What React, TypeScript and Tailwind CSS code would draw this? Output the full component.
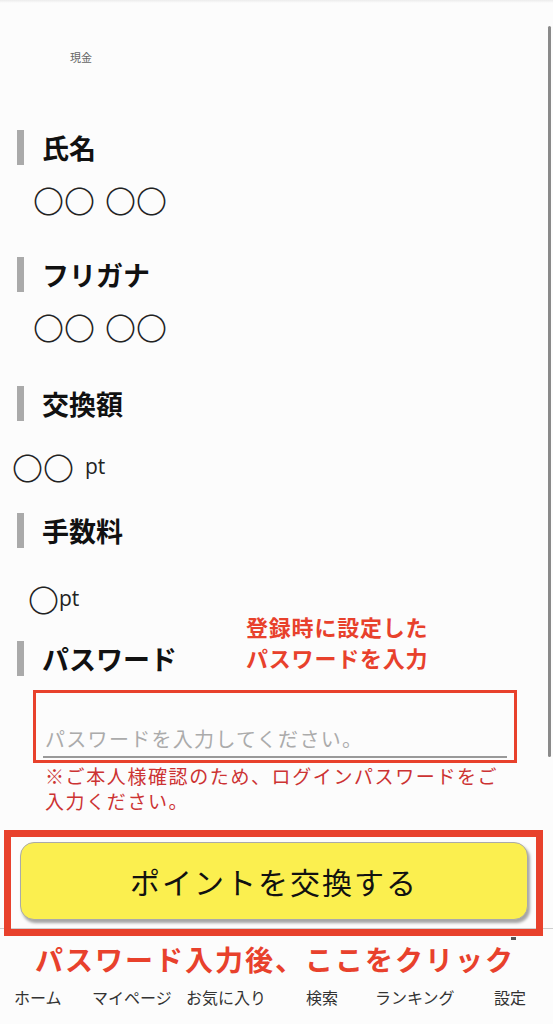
import React from 'react';

const jp = "font-['Noto_Sans_CJK_JP','Noto_Sans',sans-serif]";

interface HeadingProps {
  title: string;
  className?: string;
}

const SectionHeading: React.FC<HeadingProps> = ({ title, className = '' }) => (
  <div className={`flex items-center h-[35px] ${className}`}>
    <span className="ml-[17px] w-[7px] h-full bg-[#aaaaaa]" />
    <h3 className="ml-[18px] text-[27px] leading-[35px] font-bold text-[#111]">{title}</h3>
  </div>
);

const navItems = [
  { label: 'ホーム', cls: 'ml-[14px] w-[78px]' },
  { label: 'マイページ', cls: 'w-[94px]' },
  { label: 'お気に入り', cls: 'w-[120px]' },
  { label: '検索', cls: 'w-[69px]' },
  { label: 'ランキング', cls: 'w-[119px]' },
  { label: '設定', cls: 'w-[50px]' },
];

export default function App() {
  return (
    <div className={`relative w-[553px] h-[1024px] overflow-hidden bg-[#fcfcfc] ${jp}`}>
      {/* header shadow */}
      <div className="h-[3px] bg-gradient-to-b from-[#ececec] to-[#fcfcfc]" />

      <div className="pt-[46px] pl-[70px] text-[11px] leading-[16px] text-[#666]">現金</div>

      <SectionHeading title="氏名" className="mt-[65px]" />
      <div className="mt-[16px] pl-[33px] h-[36px] flex items-center text-[31px] font-light text-[#222] leading-none">
        〇〇<span className="w-[10px]" />〇〇
      </div>

      <SectionHeading title="フリガナ" className="mt-[40px]" />
      <div className="mt-[16px] pl-[33px] h-[36px] flex items-center text-[31px] font-light text-[#222] leading-none">
        〇〇<span className="w-[10px]" />〇〇
      </div>

      <SectionHeading title="交換額" className="mt-[42px]" />
      <div className="mt-[27px] pl-[12px] h-[36px] flex items-center text-[#222]">
        <span className="text-[31px] font-light leading-none">〇〇</span>
        <span className="ml-[11px] text-[21px] leading-none font-['Open_Sans',sans-serif]">pt</span>
      </div>

      <SectionHeading title="手数料" className="mt-[29px]" />
      <div className="mt-[32px] pl-[28px] h-[36px] flex items-center text-[#222]">
        <span className="text-[31px] font-light leading-none">〇</span>
        <span className="text-[21px] leading-none font-['Open_Sans',sans-serif]">pt</span>
      </div>

      <div className="relative mt-[25px]">
        <SectionHeading title="パスワード" />
        <p className="absolute left-[246px] top-[-30px] text-[22px] leading-[31px] font-bold tracking-[0.8px] text-[#e8412c]">
          登録時に設定した
          <br />
          パスワードを入力
        </p>
      </div>

      <div className="mt-[14px] ml-[33px] w-[484px] h-[73px] border-[3px] border-[#e8412c] flex items-end px-[7px] pb-[2px]">
        <input
          type="password"
          placeholder="パスワードを入力してください。"
          className="w-full h-[40px] bg-transparent border-b-2 border-[#999] text-[20px] tracking-[1.3px] pl-[2px] pt-[2px] placeholder-[#ababab] outline-none"
        />
      </div>
      <div className="pl-[45px] text-[19px] leading-[25px] tracking-[1.6px] text-[#cc3333]">
        <p>※ご本人様確認のため、ログインパスワードをご</p>
        <p>入力ください。</p>
      </div>

      {/* exchange button */}
      <div className="relative z-10 mt-[17px] ml-[4px] w-[539px] h-[106px] border-[7px] border-[#e8412c] pt-[5px] pl-[9px] pr-[8px]">
        <button className="w-full h-[78px] rounded-[14px] bg-[#fbef4f] border border-[#aaa] shadow-[2px_3px_3px_rgba(0,0,0,0.35)] text-[30px] tracking-[2px] text-[#111]">
          ポイントを交換する
        </button>
      </div>

      {/* bottom navigation */}
      <nav className="absolute left-0 right-0 bottom-0 h-[96px] border-t border-[#cfcfcf] bg-[#fcfcfc]">
        <span className="absolute left-[511px] top-[8px] w-[5px] h-[3px] bg-[#555]" />
        <p className="relative z-10 pt-[10px] pl-[35px] text-[28px] leading-[40px] font-bold tracking-[2px] text-[#e8412c]">
          パスワード入力後、ここをクリック
        </p>
        <div className="mt-[8px] flex text-[16px] leading-[20px] text-[#333]">
          {navItems.map((item) => (
            <span key={item.label} className={`shrink-0 ${item.cls}`}>
              {item.label}
            </span>
          ))}
        </div>
      </nav>

      {/* scrollbar */}
      <div className="absolute right-[2px] top-[26px] w-[3px] h-[731px] rounded-full bg-[#8a8a8a]" />
    </div>
  );
}
